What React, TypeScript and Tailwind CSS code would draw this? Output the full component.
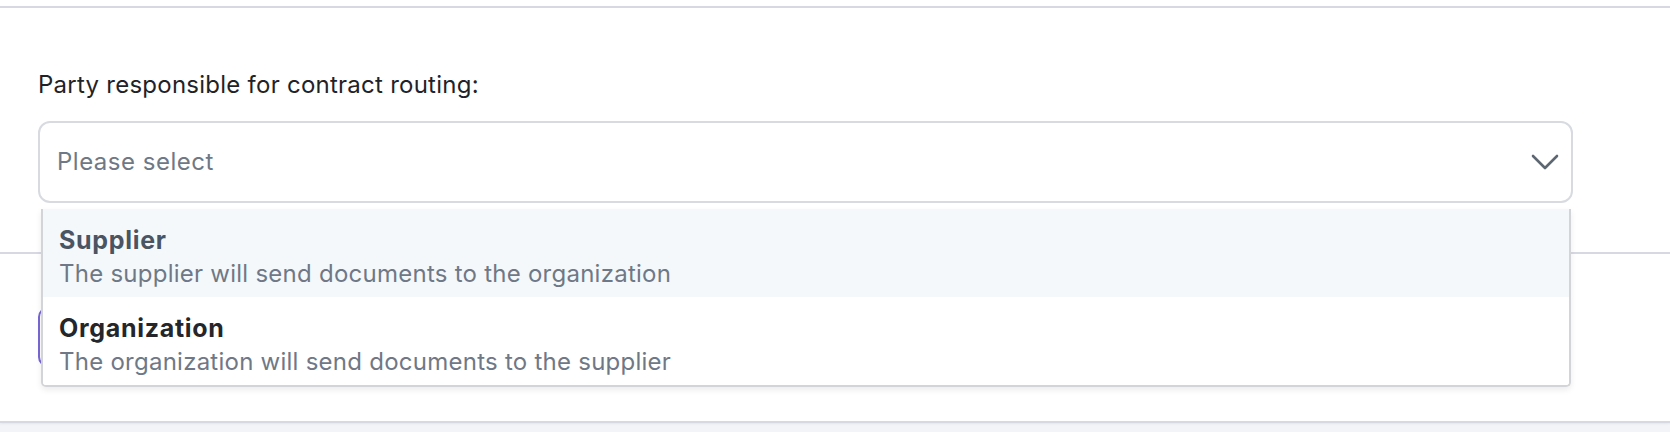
const options = [
  {
    label: "Supplier",
    description: "The supplier will send documents to the organization",
    active: true,
  },
  {
    label: "Organization",
    description: "The organization will send documents to the supplier",
    active: false,
  },
];

export default function App() {
  return (
    <div className="min-h-screen bg-[#f3f4f8] font-['Inter',sans-serif]">
      <div className="h-[6px] bg-white" />
      <div className="border-t-2 border-b-2 border-[#d6d9e1] bg-white shadow-[0_1px_2px_rgba(0,0,0,0.06)]">
        <section className="pl-[38px] pr-[97px] pt-[61px] pb-[49px]">
          <label className="block text-[24px] leading-[32px] tracking-[0.25px] text-[#1f2328]">
            Party responsible for contract routing:
          </label>

          <div className="relative mt-[20px]">
            <button
              type="button"
              className="flex h-[82px] w-full items-center justify-between rounded-[12px] border-2 border-[#d7dae0] bg-white pl-[17px] pr-[12px] text-left"
            >
              <span className="text-[24px] tracking-[0.5px] text-[#6f7885]">Please select</span>
              <svg
                width="28"
                height="16"
                viewBox="0 0 28 16"
                fill="none"
                stroke="#5d6772"
                strokeWidth="2.6"
                strokeLinecap="round"
                strokeLinejoin="round"
              >
                <polyline points="2,2 14,14 26,2" />
              </svg>
            </button>

            <ul className="absolute left-[3px] right-[2px] top-[88px] z-10 overflow-hidden rounded-b-[5px] border-2 border-t-0 border-[#d3d4d8] bg-white shadow-[0_3px_6px_rgba(0,0,0,0.08)]">
              {options.map((option) => (
                <li
                  key={option.label}
                  className={`px-[16px] pt-[14px] pb-[6px] ${option.active ? "bg-[#f4f8fb]" : "bg-white"}`}
                >
                  <div
                    className={`text-[25px] leading-[34px] font-bold tracking-[0.7px] ${option.active ? "text-[#4a5563]" : "text-[#24262b]"}`}
                  >
                    {option.label}
                  </div>
                  <div className="text-[24px] leading-[34px] tracking-[0.25px] text-[#6f7886]">
                    {option.description}
                  </div>
                </li>
              ))}
            </ul>
          </div>
        </section>

        <footer className="border-t-2 border-[#d6d9e1] pl-[38px] pr-[97px] pt-[53px] pb-[54px]">
          <button
            type="button"
            aria-label="Save"
            className="block h-[60px] w-[220px] rounded-[10px] border-2 border-[#7866d6] bg-white"
          />
        </footer>
      </div>
    </div>
  );
}
